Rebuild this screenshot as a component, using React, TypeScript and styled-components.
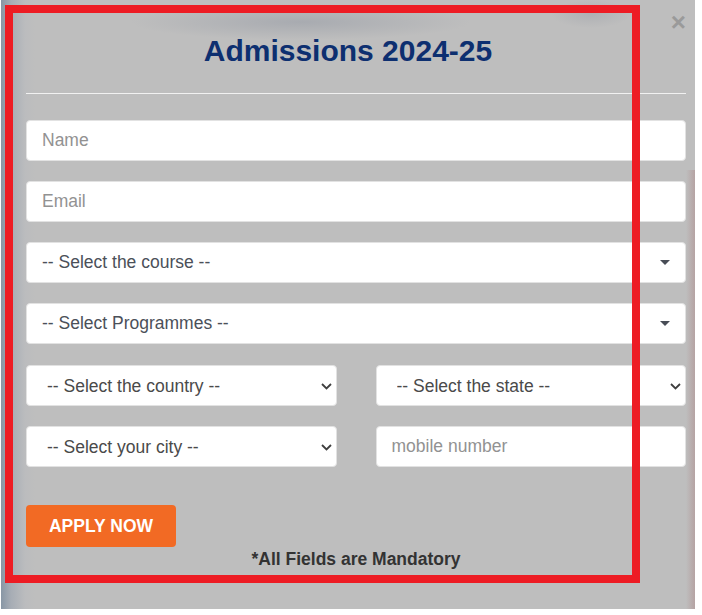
import React, { FunctionComponent } from 'react';
import styled, { createGlobalStyle, css } from 'styled-components';

const GlobalStyle = createGlobalStyle`
  html, body {
    margin: 0;
    padding: 0;
    background: #ffffff;
  }

  body {
    font-family: 'Liberation Sans', Arial, sans-serif;
  }
`;

const Backdrop = styled.div`
  position: relative;
  box-sizing: border-box;
  width: 694px;
  height: 609px;
  margin-left: 1px;
  padding: 34px 9px 0 25px;
  overflow: hidden;
  background-color: #bebebe;
  background-image:
    linear-gradient(to right, #8896a5 0px, #a7adb5 10px, #bbbcbe 24px, rgba(190, 190, 190, 0) 34px),
    linear-gradient(to left, rgba(180, 160, 160, 0.9) 0px, rgba(190, 190, 190, 0) 9px),
    radial-gradient(ellipse 170px 18px at 300px 22px, rgba(150, 155, 165, 0.55), rgba(190, 190, 190, 0)),
    radial-gradient(ellipse 40px 14px at 590px 14px, rgba(160, 163, 170, 0.5), rgba(190, 190, 190, 0));
  background-repeat: no-repeat;
  background-size: 100% 100%, 10px 440px, 100% 100%, 100% 100%;
  background-position: 0 0, right 170px, 0 0, 0 0;
`;

const CloseButton = styled.span`
  position: absolute;
  top: 9px;
  right: 9px;
  font-size: 26px;
  line-height: 26px;
  font-weight: 700;
  color: #9a9a9a;
  cursor: pointer;
`;

const Title = styled.h2`
  margin: 0;
  padding-right: 16px;
  font-size: 30px;
  line-height: 33px;
  font-weight: 700;
  text-align: center;
  color: #0d2f70;
`;

const Divider = styled.hr`
  margin: 26px 0 0;
  border: none;
  height: 1px;
  background: #f1f1f1;
`;

const Form = styled.form`
  display: flex;
  flex-direction: column;
  gap: 20px;
  margin-top: 26px;
`;

const Pair = styled.div`
  display: grid;
  grid-template-columns: 1fr 1fr;
  column-gap: 39px;
  margin-top: 1px;

  & + & {
    margin-top: 0;
  }
`;

const fieldBox = css`
  box-sizing: border-box;
  width: 100%;
  height: 41px;
  margin: 0;
  border: 1px solid #e2e2e2;
  border-radius: 4px;
  background: #ffffff;
  font-family: 'Liberation Sans', Arial, sans-serif;
  font-size: 17.5px;
  color: #4a4a4a;
  outline: none;
`;

const TextInput = styled.input`
  ${fieldBox}
  padding: 0 15px;

  &::placeholder {
    color: #929292;
  }
`;

const SelectWrap = styled.div`
  position: relative;
`;

const NativeSelect = styled.select`
  ${fieldBox}
  appearance: none;
  padding: 0 30px 0 20px;
`;

const Chevron = styled.svg`
  position: absolute;
  top: 50%;
  right: 5px;
  width: 11px;
  height: 7px;
  margin-top: -3px;
  pointer-events: none;
`;

const Dropdown = styled.div`
  ${fieldBox}
  display: flex;
  align-items: center;
  justify-content: space-between;
  padding: 0 15px;
  color: #4b5059;
  cursor: pointer;
`;

const Caret = styled.span`
  width: 0;
  height: 0;
  border-style: solid;
  border-width: 5px 5px 0 5px;
  border-color: #484d56 transparent transparent transparent;
`;

const Footer = styled.div`
  display: flex;
  flex-direction: column;
  margin-top: 38px;
`;

const ApplyButton = styled.button`
  align-self: flex-start;
  width: 150px;
  height: 42px;
  border: none;
  border-radius: 4px;
  background: #f26a24;
  color: #ffffff;
  font-family: 'Liberation Sans', Arial, sans-serif;
  font-size: 17.5px;
  font-weight: 700;
  cursor: pointer;
`;

const Note = styled.p`
  margin: 2px 0 0;
  font-size: 17.5px;
  line-height: 20px;
  font-weight: 700;
  text-align: center;
  color: #333333;
`;

const Highlight = styled.div`
  position: absolute;
  top: 5px;
  left: 4px;
  width: 635px;
  height: 578px;
  box-sizing: border-box;
  border: 8px solid #ed1c24;
  pointer-events: none;
`;

const SelectField: FunctionComponent<{ label: string }> = ({ label }) => (
  <SelectWrap>
    <NativeSelect defaultValue="">
      <option value="">{label}</option>
    </NativeSelect>
    <Chevron viewBox="0 0 11 7">
      <path d="M1 1l4.5 4.5L10 1" fill="none" stroke="#3f3f3f" strokeWidth="1.8" />
    </Chevron>
  </SelectWrap>
);

const App: FunctionComponent = () => {
  return (
    <>
      <GlobalStyle />
      <Backdrop>
        <CloseButton>×</CloseButton>
        <Title>Admissions 2024-25</Title>
        <Divider />
        <Form onSubmit={(e) => e.preventDefault()}>
          <TextInput type="text" placeholder="Name" />
          <TextInput type="email" placeholder="Email" />
          <Dropdown>
            <span>-- Select the course --</span>
            <Caret />
          </Dropdown>
          <Dropdown>
            <span>-- Select Programmes --</span>
            <Caret />
          </Dropdown>
          <Pair>
            <SelectField label="-- Select the country --" />
            <SelectField label="-- Select the state --" />
          </Pair>
          <Pair>
            <SelectField label="-- Select your city --" />
            <TextInput type="tel" placeholder="mobile number" />
          </Pair>
        </Form>
        <Footer>
          <ApplyButton type="button">APPLY NOW</ApplyButton>
          <Note>*All Fields are Mandatory</Note>
        </Footer>
        <Highlight />
      </Backdrop>
    </>
  );
};

export default App;
